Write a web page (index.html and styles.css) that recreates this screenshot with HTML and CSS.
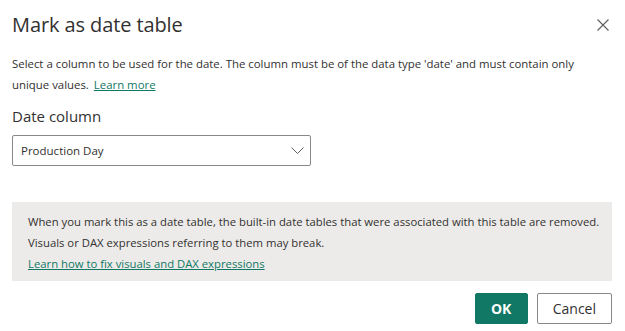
FILE: index.html
```html
<!DOCTYPE html>
<html lang="en">
<head>
  <meta charset="UTF-8">
  <title>Mark as date table</title>
  <link rel="stylesheet" href="styles.css">
</head>
<body>
  <div class="dialog">
    <header class="dialog-header">
      <h1>Mark as date table</h1>
      <button class="closeBtn" aria-label="Close">
        <svg width="12" height="12" viewBox="0 0 12 12"><path d="M0.5 0.5L11.5 11.5M11.5 0.5L0.5 11.5" stroke="#605e5c" stroke-width="1.1" fill="none"/></svg>
      </button>
    </header>

    <p class="intro">Select a column to be used for the date. The column must be of the data type 'date' and must contain only unique values. <a href="#">Learn more</a></p>

    <label class="field-label">Date column</label>
    <div class="dropdown">
      <span>Production Day</span>
      <svg width="13" height="7" viewBox="0 0 13 7"><path d="M0.5 0.5L6.5 6.5L12.5 0.5" stroke="#605e5c" stroke-width="1" fill="none"/></svg>
    </div>

    <div class="warning">
      <p>When you mark this as a date table, the built-in date tables that were associated with this table are removed. Visuals or DAX expressions referring to them may break.</p>
      <a href="#">Learn how to fix visuals and DAX expressions</a>
    </div>

    <div class="actions">
      <button class="btn primary">OK</button>
      <button class="btn">Cancel</button>
    </div>
  </div>
</body>
</html>
```

FILE: styles.css
```css
body {
  margin: 0;
  background: #ffffff;
  font-family: "Segoe UI", "Open Sans", Arial, sans-serif;
  color: #323130;
}

.dialog {
  width: 625px;
  height: 331px;
  padding: 0 13px 0 12px;
  box-sizing: border-box;
}

.dialog-header {
  display: flex;
  justify-content: space-between;
  align-items: center;
  height: 47px;
  padding-top: 1px;
}

.dialog-header h1 {
  margin: 0;
  font-size: 20px;
  font-weight: 400;
  letter-spacing: -0.1px;
}

.closeBtn {
  border: none;
  background: none;
  padding: 0;
  margin-right: 3px;
  cursor: pointer;
  display: flex;
}

.intro {
  margin: 5px 0 0;
  font-size: 11.4px;
  line-height: 21px;
  padding-right: 30px;
}

a {
  color: #117865;
  text-decoration: underline;
}

.intro a {
  margin-left: 2px;
}

.field-label {
  display: block;
  font-size: 15px;
  margin-top: 10px;
  line-height: 22px;
}

.dropdown {
  width: 299px;
  height: 31px;
  margin-top: 8px;
  border: 1px solid #8a8886;
  border-radius: 2px;
  box-sizing: border-box;
  display: flex;
  align-items: center;
  justify-content: space-between;
  padding: 0 6px 0 8px;
  font-size: 11.5px;
}

.warning {
  margin-top: 36px;
  background: #edebe9;
  padding: 9px 6px 7px 16px;
  font-size: 11.3px;
  line-height: 21px;
}

.warning p {
  margin: 0;
}

.actions {
  display: flex;
  justify-content: flex-end;
  gap: 9px;
  margin-top: 12px;
}

.btn {
  height: 31px;
  min-width: 53px;
  padding: 0 15px;
  border: 1px solid #8a8886;
  border-radius: 2px;
  background: #ffffff;
  color: #323130;
  font-family: inherit;
  font-size: 14px;
  cursor: pointer;
}

.btn.primary {
  background: #117865;
  border-color: #117865;
  color: #ffffff;
  font-weight: 700;
  padding: 0 12px;
}
```
